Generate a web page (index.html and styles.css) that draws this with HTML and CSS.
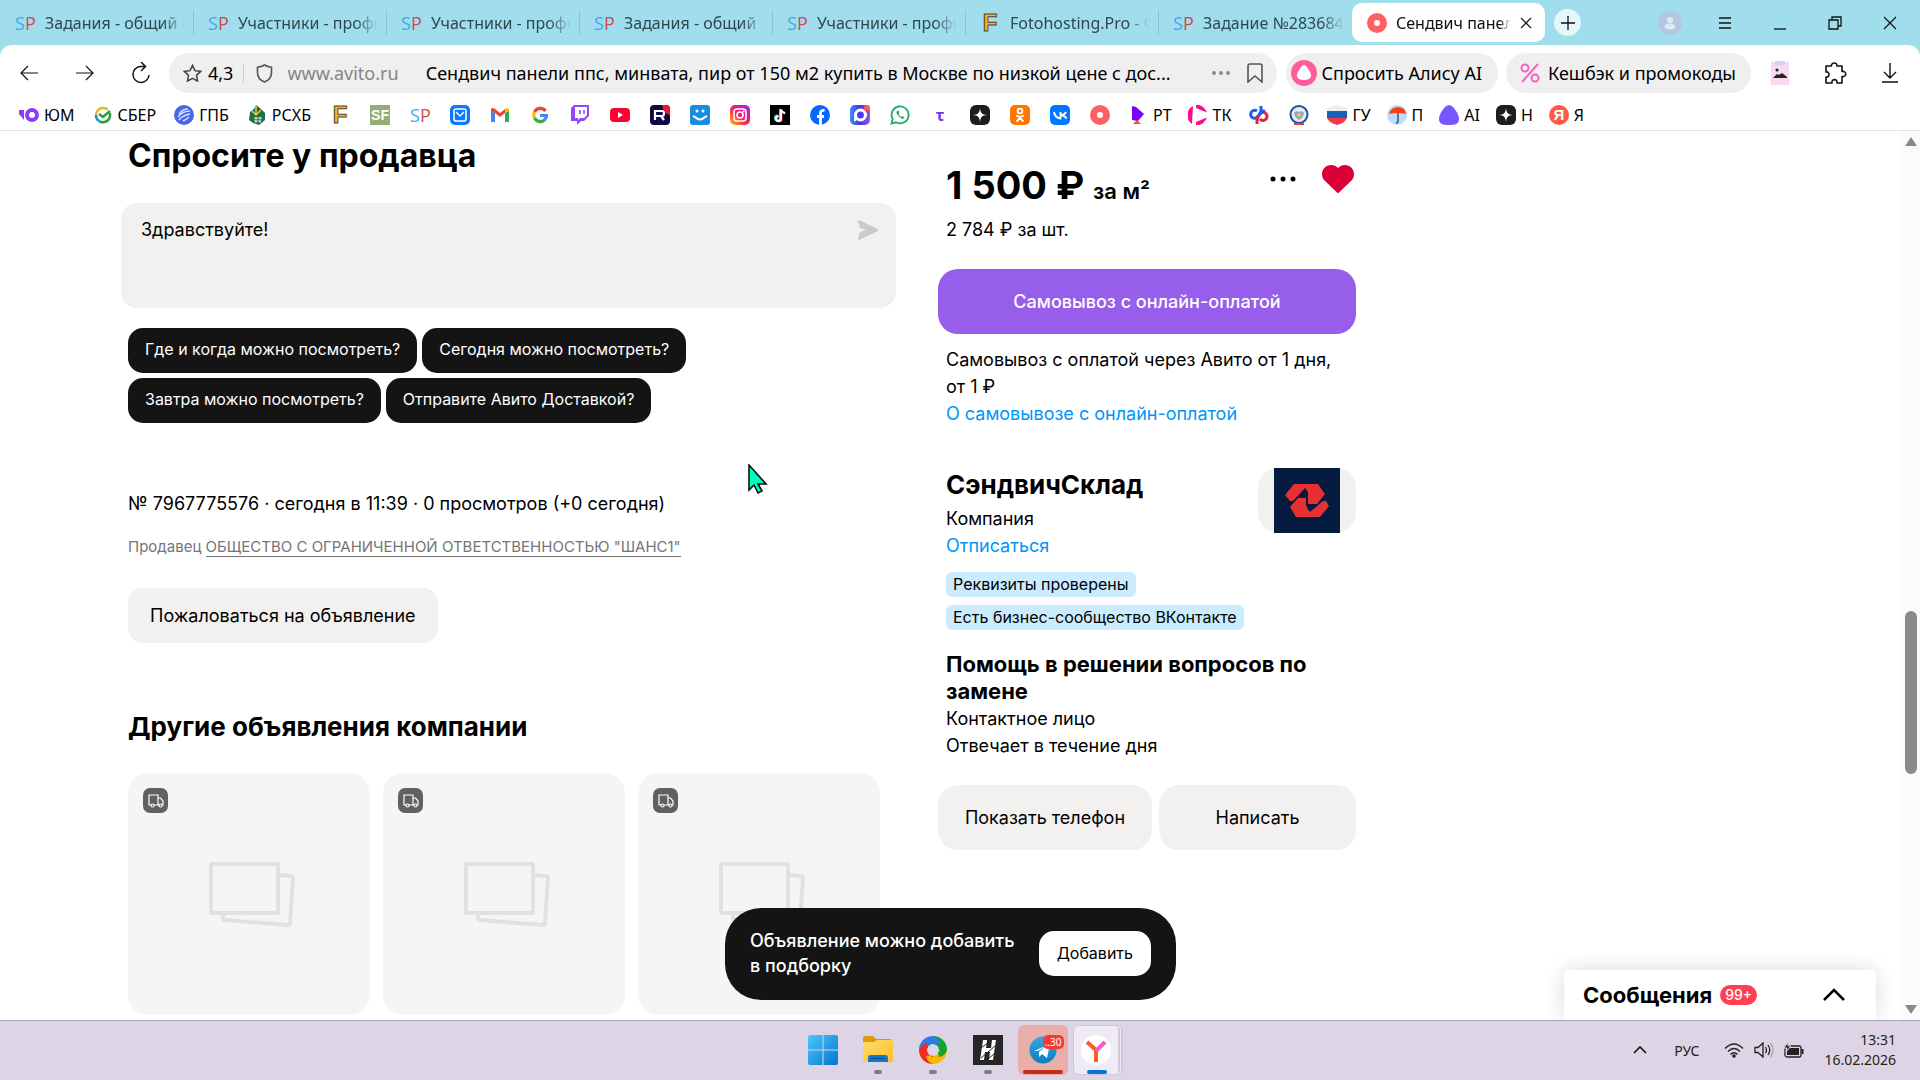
FILE: index.html
```html
<!DOCTYPE html>
<html lang="ru">
<head>
  <meta charset="UTF-8" />
  <meta name="viewport" content="width=device-width, initial-scale=1.0"/>
  <title>Сендвич панели ппс, минвата, пир от 150 м2</title>
  <link rel="stylesheet" href="styles.css">
</head>
<body>
  <!-- shared icons -->
  <svg class="defs" width="0" height="0" aria-hidden="true">
    <defs>
      <linearGradient id="insta" x1="0" y1="1" x2="1" y2="0">
        <stop offset="0" stop-color="#ffc400"/><stop offset=".45" stop-color="#ff1f5a"/><stop offset="1" stop-color="#a01cf5"/>
      </linearGradient>
      <linearGradient id="max" x1="0" y1="0" x2="1" y2="0">
        <stop offset="0" stop-color="#3a8dff"/><stop offset=".5" stop-color="#4436e8"/><stop offset="1" stop-color="#a050e0"/>
      </linearGradient>
      <linearGradient id="win" x1="0" y1="0" x2="1" y2="1">
        <stop offset="0" stop-color="#4cc9fb"/><stop offset="1" stop-color="#0573d2"/>
      </linearGradient>
      <linearGradient id="folder" x1="0" y1="0" x2="1" y2="1">
        <stop offset="0" stop-color="#ffdc6e"/><stop offset="1" stop-color="#fdbf24"/>
      </linearGradient>
      <linearGradient id="tg" x1="0" y1="0" x2="0" y2="1">
        <stop offset="0" stop-color="#35a9e0"/><stop offset="1" stop-color="#0d7fbf"/>
      </linearGradient>
    </defs>
    <symbol id="i-avito" viewBox="0 0 20 20"><circle cx="10" cy="10" r="10" fill="#ff6163"/><circle cx="10" cy="10" r="3" fill="#fff"/></symbol>
    <symbol id="i-neuro" viewBox="0 0 20 20"><rect width="20" height="20" rx="6" fill="#1d1d1f"/><path d="M10 3c.5 5 2 6.500 7 7-5 .5-6.500 2-7 7-.5-5-2-6.500-7-7 5-.5 6.500-2 7-7z" fill="#fff"/></symbol>
    <symbol id="i-truck" viewBox="0 0 16 14"><g fill="none" stroke="#fff" stroke-width="1.200"><path d="M3 11H1V1h9v10H6M10 4h2.500L15 7v4h-1M10 11h1"/><circle cx="4.500" cy="11.500" r="1.500"/><circle cx="12.500" cy="11.500" r="1.500"/></g></symbol>
    <symbol id="i-photo" viewBox="0 0 86 66"><g fill="none" stroke="#e1e1e1" stroke-width="4" stroke-linejoin="round"><rect x="2" y="3" width="67" height="49" rx="1"/><path d="M71 14l11 1q2 0 2 2l-3 45q0 2-2 2L16 59q-2 0-2-2v-4"/></g></symbol>
  </svg>

  <!-- tabs -->
  <header class="tabs">
    <a class="tab" href="#"><span class="sp"><b>S</b><i>P</i></span><span class="tab-text">Задания - общий с</span></a>
    <a class="tab" href="#"><span class="sp"><b>S</b><i>P</i></span><span class="tab-text">Участники - профи</span></a>
    <a class="tab" href="#"><span class="sp"><b>S</b><i>P</i></span><span class="tab-text">Участники - профи</span></a>
    <a class="tab" href="#"><span class="sp"><b>S</b><i>P</i></span><span class="tab-text">Задания - общий с</span></a>
    <a class="tab" href="#"><span class="sp"><b>S</b><i>P</i></span><span class="tab-text">Участники - профи</span></a>
    <a class="tab" href="#"><span class="foto">F</span><span class="tab-text">Fotohosting.Pro - Ф</span></a>
    <a class="tab" href="#"><span class="sp"><b>S</b><i>P</i></span><span class="tab-text">Задание №283684</span></a>
    <div class="tab active">
      <svg class="ico"><use href="#i-avito"/></svg>
      <span class="tab-text">Сендвич панели</span>
      <button class="tab-close" aria-label="Закрыть вкладку"><svg width="12" height="12" viewBox="0 0 12 12"><path d="M1 1l10 10M11 1L1 11" stroke="#222" stroke-width="1.300"/></svg></button>
    </div>
    <button class="new-tab" aria-label="Новая вкладка"><svg width="14" height="14" viewBox="0 0 14 14"><path d="M7 0v14M0 7h14" stroke="#111" stroke-width="1.300"/></svg></button>
    <div class="window-buttons">
      <button aria-label="Профиль"><svg width="24" height="24" viewBox="0 0 24 24"><circle cx="12" cy="12" r="12" fill="#b3c8de"/><circle cx="12" cy="9" r="3" fill="#ddebf4"/><ellipse cx="12" cy="15.500" rx="5.500" ry="3" fill="#ddebf4"/></svg></button>
      <button aria-label="Меню"><svg width="14" height="14" viewBox="0 0 14 14"><path d="M1 2h12M1 7h12M1 12h12" stroke="#111" stroke-width="1.300"/></svg></button>
      <button aria-label="Свернуть"><svg width="14" height="14" viewBox="0 0 14 14"><path d="M1 13h12" stroke="#111" stroke-width="1.300"/></svg></button>
      <button aria-label="Окно"><svg width="14" height="14" viewBox="0 0 14 14"><path d="M1 4h9v9H1zM4 4V1h9v9h-3" fill="none" stroke="#111" stroke-width="1.300"/></svg></button>
      <button aria-label="Закрыть"><svg width="14" height="14" viewBox="0 0 14 14"><path d="M1 1l12 12M13 1L1 13" stroke="#111" stroke-width="1.200"/></svg></button>
    </div>
  </header>

  <div class="chrome">
    <!-- toolbar -->
    <div class="toolbar">
      <button class="nav" aria-label="Назад"><svg width="18" height="16" viewBox="0 0 18 16"><path d="M18 8H1M8 1L1 8l7 7" fill="none" stroke="#111" stroke-width="1.200"/></svg></button>
      <button class="nav" aria-label="Вперёд"><svg width="18" height="16" viewBox="0 0 18 16"><path d="M0 8h17M10 1l7 7-7 7" fill="none" stroke="#111" stroke-width="1.200"/></svg></button>
      <button class="nav" aria-label="Обновить"><svg width="20" height="22" viewBox="0 0 20 22"><path d="M14 4.500H9A8 8 0 1 0 18 13M10 0l4.500 4.500L10 9" fill="none" stroke="#111" stroke-width="1.500"/></svg></button>
      <div class="address">
        <svg width="19" height="18" viewBox="0 0 20 19"><path d="M10 1.500l2.600 5.500 6 .8-4.400 4.200 1.100 6L10 15.100 4.700 18l1.100-6L1.400 7.800l6-.8z" fill="none" stroke="#444" stroke-width="1.600"/></svg>
        <span class="rate">4,3</span>
        <span class="bar"></span>
        <svg width="17" height="19" viewBox="0 0 17 19"><path d="M8.500 1c2 1.500 4.500 2 7 2.200v5.300c0 5-3 8-7 9.500-4-1.500-7-4.500-7-9.500V3.200C4 3 6.500 2.500 8.500 1z" fill="none" stroke="#555" stroke-width="1.600"/></svg>
        <span class="host">www.avito.ru</span>
        <input class="page-name" type="text" aria-label="Адрес страницы" value="Сендвич панели ппс, минвата, пир от 150 м2 купить в Москве по низкой цене с дос..." />
        <button aria-label="Ещё"><svg width="20" height="6" viewBox="0 0 20 6"><g fill="#8b8b8b"><circle cx="3" cy="3" r="2"/><circle cx="10" cy="3" r="2"/><circle cx="17" cy="3" r="2"/></g></svg></button>
        <button aria-label="В закладки"><svg width="16" height="20" viewBox="0 0 16 20"><path d="M1 3q0-2 2-2h10q2 0 2 2v16l-7-6-7 6z" fill="none" stroke="#555" stroke-width="1.600"/></svg></button>
      </div>
      <button class="pill alice"><svg width="26" height="26" viewBox="0 0 26 26"><circle cx="13" cy="13" r="13" fill="#ff5c9c"/><path d="M13 5c2.500 0 7 7.500 7 10.500S17 20 13 20s-7-1.500-7-4.500S10.500 5 13 5z" fill="#fff"/></svg>Спросить Алису AI</button>
      <button class="pill"><svg width="20" height="20" viewBox="0 0 20 20"><g fill="none" stroke="#f263c4" stroke-width="2"><circle cx="5" cy="5" r="3.500"/><circle cx="15" cy="15" r="3.500"/><path d="M18 1L2 19"/></g></svg>Кешбэк и промокоды</button>
      <div class="tools">
        <button aria-label="Картинка"><svg width="18" height="24" viewBox="0 0 18 24"><rect y="1" width="18" height="23" fill="#f8d8f3"/><rect x="4" width="10" height="4" fill="#d8d3f2"/><circle cx="6" cy="9" r="1.500" fill="#222"/><path d="M2 17l4-4 2 1 3-2 5 4v1z" fill="#222"/></svg></button>
        <button aria-label="Расширения"><svg width="23" height="22" viewBox="0 0 23 22"><path d="M2 4h5.500C7 0 13.500 0 13 4h5v5.500c5-1 5 6 0 5V21h-5c1-4.500-6-4.500-5 0H2v-6c4 1 4-6 0-5z" fill="none" stroke="#111" stroke-width="1.600" stroke-linejoin="round"/></svg></button>
        <button aria-label="Загрузки"><svg width="16" height="20" viewBox="0 0 16 20"><path d="M8 0v15M2 9l6 6 6-6M0 19h16" fill="none" stroke="#111" stroke-width="1.400"/></svg></button>
      </div>
    </div>

    <!-- bookmarks -->
    <nav class="bookmarks">
      <a class="named" href="#"><svg class="ico" viewBox="0 0 20 20"><circle cx="13" cy="10" r="7" fill="#8b3ffd"/><circle cx="13" cy="10" r="3" fill="#fff"/><path d="M0 5h5v10L0 9z" fill="#8b3ffd"/></svg>ЮМ</a>
      <a class="named" href="#"><svg class="ico" viewBox="0 0 20 20"><g fill="none" stroke-width="2.500"><path d="M10 3a7 7 0 0 0-7 7" stroke="#f2b414"/><path d="M10 3c2 0 3.500.5 4.500 1.500" stroke="#9fd01c"/><path d="M3 10a7 7 0 0 0 3 6" stroke="#1795e0"/><path d="M6 16a7 7 0 0 0 11-6V8" stroke="#21a038"/><path d="M6 9l4 3 7-6" stroke="#21a038"/></g></svg>СБЕР</a>
      <a class="named" href="#"><svg class="ico" viewBox="0 0 20 20"><circle cx="10" cy="10" r="10" fill="#4668e8"/><path d="M5 9c2-3 5-5 9-5M4 12c3-4 7-6 12-6M5 15c2-3 6-5 11-6M9 16c2-1 4-2 6-4" fill="none" stroke="#d7dfff" stroke-width="1.400"/></svg>ГПБ</a>
      <a class="named" href="#"><svg class="ico" viewBox="0 0 20 20"><path d="M9 0l5 4 4 4v7l-6 5-6-2-4-3 1-8 4-3z" fill="#1d7044"/><path d="M9 1v9M5 6l4 4 5-5" stroke="#e6c94d" stroke-width="1.500" fill="none"/><path d="M7 13h8M7 16h7M9 12v6M13 12v6" stroke="#dbe9df"/></svg>РСХБ</a>
      <a href="#" aria-label="Fotohosting"><span class="foto">F</span></a>
      <a href="#" aria-label="SF"><span class="sf">SF</span></a>
      <a href="#" aria-label="SP"><span class="sp"><b>S</b><i>P</i></span></a>
      <a href="#" aria-label="Почта"><svg class="ico" viewBox="0 0 20 20"><rect width="20" height="20" rx="5" fill="#0a78ff"/><rect x="4" y="4" width="12" height="12" rx="2" fill="none" stroke="#fff" stroke-width="1.500"/><path d="M6 7l4 4 4-4" fill="none" stroke="#fff" stroke-width="1.500"/></svg></a>
      <a href="#" aria-label="Gmail"><svg class="ico" viewBox="0 0 20 20"><path d="M1 17V5l4 3v9z" fill="#4285f4"/><path d="M15 17V8l4-3v12z" fill="#34a853"/><path d="M1 6V4q2-2 4 0l5 4 5-4v4l-5 4-5-4z" fill="#ea4335"/><path d="M15 8V4q3-2 4 0v2z" fill="#fbbc04"/></svg></a>
      <a href="#" aria-label="Google"><svg class="ico" viewBox="0 0 20 20"><g fill="none" stroke-width="3.200"><path d="M15.500 6A6.500 6.500 0 0 0 4.500 7" stroke="#ea4335"/><path d="M4.500 7a6.500 6.500 0 0 0 0 6" stroke="#fbbc05"/><path d="M4.500 13a6.500 6.500 0 0 0 10 2" stroke="#34a853"/><path d="M14.500 15q2-2 2-4.500H10" stroke="#4285f4"/></g></svg></a>
      <a href="#" aria-label="Twitch"><svg class="ico" viewBox="0 0 20 20"><path d="M4 0h15v11l-5 5h-3l-4 4v-4H1V3z" fill="#9146ff"/><path d="M5 2h12v8l-3 3h-4l-2 2v-2H5z" fill="#fff"/><path d="M10 5v4M14 5v4" stroke="#9146ff" stroke-width="1.600"/></svg></a>
      <a href="#" aria-label="YouTube"><svg class="ico" viewBox="0 0 20 20"><rect y="3" width="20" height="14" rx="4" fill="#f03"/><path d="M8 7l5 3-5 3z" fill="#fff"/></svg></a>
      <a href="#" aria-label="Rutube"><svg class="ico" viewBox="0 0 20 20"><rect width="20" height="20" rx="4" fill="#100943"/><path d="M12 0h4q4 0 4 4v6q-7-1-8-10z" fill="#ed143b"/><path d="M5 15V6h7q2 0 2 2.500T12 11H5M11 11l3 4" fill="none" stroke="#fff" stroke-width="2.200"/></svg></a>
      <a href="#" aria-label="Смайл"><svg class="ico" viewBox="0 0 20 20"><rect width="20" height="20" rx="3" fill="#168de2"/><circle cx="7" cy="6" r="1.500" fill="#fff"/><circle cx="13" cy="6" r="1.500" fill="#fff"/><path d="M3 11l2 1q5 5 10 0l2-1" fill="none" stroke="#fff" stroke-width="2"/></svg></a>
      <a href="#" aria-label="Instagram"><svg class="ico" viewBox="0 0 20 20"><rect width="20" height="20" rx="5" fill="url(#insta)"/><g fill="none" stroke="#fff" stroke-width="1.600"><rect x="4" y="4" width="12" height="12" rx="3"/><circle cx="10" cy="10" r="3"/></g><circle cx="13.500" cy="6.500" r="1" fill="#fff"/></svg></a>
      <a href="#" aria-label="TikTok"><svg class="ico" viewBox="0 0 20 20"><rect width="20" height="20"/><g fill="none" stroke-width="2"><path d="M10 4v9a2.500 2.500 0 1 1-2.500-2.500M10 4q1 3 4 3.500" stroke="#25f4ee"/><path d="M11.500 5v9A2.500 2.500 0 1 1 9 11.500M11.500 5q1 3 4 3.500" stroke="#fe2c55"/><path d="M11 4.500v9A2.500 2.500 0 1 1 8.500 11M11 4.500q1 3 4 3.500" stroke="#fff"/></g></svg></a>
      <a href="#" aria-label="Facebook"><svg class="ico" viewBox="0 0 20 20"><circle cx="10" cy="10" r="10" fill="#0866ff"/><path d="M10.500 20v-9.500M7 11.500h7M10.500 12V8q0-3 4-2.500" fill="none" stroke="#fff" stroke-width="2.800"/></svg></a>
      <a href="#" aria-label="MAX"><svg class="ico" viewBox="0 0 20 20"><rect width="20" height="20" rx="5" fill="url(#max)"/><circle cx="10.500" cy="10" r="5" fill="none" stroke="#fff" stroke-width="3"/><path d="M4 10v6.500q2 0 3-2z" fill="#fff"/><circle cx="17" cy="3" r="3" fill="#ff5a5a"/></svg></a>
      <a href="#" aria-label="WhatsApp"><svg class="ico" viewBox="0 0 20 20"><path d="M1.500 18.500l1.200-4.500a8.500 8.500 0 1 1 3.300 3.300z" fill="#fff" stroke="#25a866" stroke-width="1.800"/><path d="M7 6q-1.500 1.500 1 4.500t5 3.500l1.500-1.500-2-1.500-1.200 1q-2-1-2.800-3l1-1L8.500 5.500z" fill="#25a866"/></svg></a>
      <a href="#" aria-label="Тау"><span class="tau">τ</span></a>
      <a href="#" aria-label="Нейро"><svg class="ico"><use href="#i-neuro"/></svg></a>
      <a href="#" aria-label="Одноклассники"><svg class="ico" viewBox="0 0 20 20"><rect width="20" height="20" rx="5" fill="#ff7700"/><g fill="none" stroke="#fff" stroke-width="1.800"><circle cx="10" cy="6" r="2.400"/><path d="M6 10.500q4 2.500 8 0M6.500 16.500L10 13l3.500 3.500M10 12v1"/></g></svg></a>
      <a href="#" aria-label="ВКонтакте"><svg class="ico" viewBox="0 0 20 20"><rect width="20" height="20" rx="5" fill="#07f"/><path d="M4 7q1 6 6.500 6.500V7M16 7q-1.500 3-5 3.200 4 .3 5.500 3.300" fill="none" stroke="#fff" stroke-width="1.900"/></svg></a>
      <a href="#" aria-label="Авито"><svg class="ico"><use href="#i-avito"/></svg></a>
      <a class="named" href="#"><svg class="ico" viewBox="0 0 20 20"><path d="M4 1l4 1 8 7-6 7-6-1z" fill="#7700ff"/><path d="M9 15l4 4H5z" fill="#ff4f12"/></svg>РТ</a>
      <a class="named" href="#"><svg class="ico" viewBox="0 0 20 20"><path d="M5 1L4 19A10.500 10.500 0 0 1 5 1zM8 0q7-1 11 7.500L8 3zM19 12.500Q15 21 8 20v-3z" fill="#ff0a8c"/></svg>ТК</a>
      <a href="#" aria-label="Партнёр"><svg class="ico" viewBox="0 0 20 20"><g fill="none" stroke-width="3"><path d="M12 1v5q-1 4-5 7a4 4 0 1 1 1-7" stroke="#1764e8"/><path d="M8 19v-4q1-4 4-7a4 4 0 1 1-1 6" stroke="#ed2039"/><path d="M10 10q3-5 6-3.500" stroke="#1764e8"/></g></svg></a>
      <a href="#" aria-label="Налоговая"><svg class="ico" viewBox="0 0 20 20"><circle cx="10" cy="9.500" r="8.500" fill="#e6edf5" stroke="#1c549e" stroke-width="2"/><path d="M5 8q2-3 5-1 3-2 5 1-1 5-5 7-4-2-5-7z" fill="#8fa6b8"/><circle cx="10" cy="10" r="2" fill="#f0c65c"/><path d="M5 19h10" stroke="#e43c31" stroke-width="2"/></svg></a>
      <a class="named" href="#"><svg class="ico" viewBox="0 0 20 20"><path d="M0 3l10-3 10 3v4H0z" fill="#eee"/><path d="M0 6h20v7H0z" fill="#1762b8"/><path d="M0 13h20q-2 5-10 7-8-2-10-7z" fill="#f0384a"/></svg>ГУ</a>
      <a class="named" href="#"><svg class="ico" viewBox="0 0 20 20"><circle cx="10" cy="10" r="10" fill="#bcdcff"/><path d="M2 9q2-7 9-7t8 7q-8-2-17 0z" fill="#ff3c17"/><path d="M11 8v8q0 2-2 2" fill="none" stroke="#345" stroke-width="1.300"/></svg>П</a>
      <a class="named" href="#"><svg class="ico" viewBox="0 0 20 20"><path d="M10 0c4 0 10 9 10 14s-4 6-10 6-10-1-10-6S6 0 10 0z" fill="#7855ff"/></svg>AI</a>
      <a class="named" href="#"><svg class="ico"><use href="#i-neuro"/></svg>Н</a>
      <a class="named" href="#"><span class="ya">Я</span>Я</a>
    </nav>
  </div>

  <!-- page -->
  <div class="viewport">
    <main class="item">
      <section class="left">
        <h2 class="ask-title">Спросите у продавца</h2>
        <div class="message">
          <textarea aria-label="Сообщение продавцу">Здравствуйте!</textarea>
          <button aria-label="Отправить"><svg width="22" height="20" viewBox="0 0 22 20"><path d="M1 1q0-1 1-1l19 9q1 1 0 2L2 20q-1 0-1-1l2-7 6-2-6-2z" fill="#cbcac8"/></svg></button>
        </div>
        <div class="chips">
          <button>Где и когда можно посмотреть?</button>
          <button>Сегодня можно посмотреть?</button>
          <button>Завтра можно посмотреть?</button>
          <button>Отправите Авито Доставкой?</button>
        </div>
        <p class="stats">№ 7967775576 · сегодня в 11:39 · 0 просмотров (+0 сегодня)</p>
        <p class="legal">Продавец <a href="#">ОБЩЕСТВО С ОГРАНИЧЕННОЙ ОТВЕТСТВЕННОСТЬЮ "ШАНС1"</a></p>
        <button class="report">Пожаловаться на объявление</button>
        <h3 class="other-title">Другие объявления компании</h3>
        <div class="cards">
          <a class="card" href="#" aria-label="Объявление 1"><span class="truck"><svg width="16" height="14"><use href="#i-truck"/></svg></span><svg width="86" height="66"><use href="#i-photo"/></svg></a>
          <a class="card" href="#" aria-label="Объявление 2"><span class="truck"><svg width="16" height="14"><use href="#i-truck"/></svg></span><svg width="86" height="66"><use href="#i-photo"/></svg></a>
          <a class="card" href="#" aria-label="Объявление 3"><span class="truck"><svg width="16" height="14"><use href="#i-truck"/></svg></span><svg width="86" height="66"><use href="#i-photo"/></svg></a>
        </div>
      </section>

      <aside class="right">
        <div class="price-row">
          <div class="price">1 500 ₽ <small>за м²</small></div>
          <button aria-label="Ещё"><svg width="26" height="6" viewBox="0 0 26 6"><circle cx="3" cy="3" r="2.500"/><circle cx="13" cy="3" r="2.500"/><circle cx="23" cy="3" r="2.500"/></svg></button>
          <button aria-label="В избранном"><svg width="32" height="28" viewBox="0 0 32 28"><path d="M9 0c3 0 5 1 7 3 2-2 4-3 7-3 5 0 9 4 9 9 0 3-1 5-3 7L17 27.500q-1 1-2 0L3 16C1 14 0 12 0 9c0-5 4-9 9-9z" fill="#db0038"/></svg></button>
        </div>
        <p class="per-item">2 784 ₽ за шт.</p>
        <button class="buy">Самовывоз с онлайн-оплатой</button>
        <p class="text">Самовывоз с оплатой через Авито от 1 дня, от 1 ₽<br><a href="#">О самовывозе с онлайн-оплатой</a></p>
        <div class="seller">
          <div>
            <h3>СэндвичСклад</h3>
            <p>Компания<br><a href="#">Отписаться</a></p>
          </div>
          <div class="avatar"><svg width="66" height="65" viewBox="0 0 66 65"><rect width="66" height="65" fill="#051a3f"/><g fill="#e63032"><path d="M11 27l9-11h24l7 10-8 10H34V24l-3-4-12 13h-3z"/><path d="M55 38l-9 11H22l-6-10 8-9h9v10l3 4 13-11h3z"/></g><path d="M33 25v13" stroke="#051a3f" stroke-width="2"/></svg></div>
        </div>
        <div class="badges"><span>Реквизиты проверены</span><span>Есть бизнес-сообщество ВКонтакте</span></div>
        <h4>Помощь в решении вопросов по замене</h4>
        <p class="contact">Контактное лицо<br>Отвечает в течение дня</p>
        <div class="actions"><button class="phone">Показать телефон</button><button class="write">Написать</button></div>
      </aside>
    </main>

    <div class="scrollbar"><span class="up"></span><span class="thumb"></span><span class="down"></span></div>

    <div class="toast">
      <p>Объявление можно добавить<br>в подборку</p>
      <button>Добавить</button>
    </div>
    <button class="messenger">Сообщения <span>99+</span><svg width="22" height="14" viewBox="0 0 22 14"><path d="M1 12L11 2l10 10" fill="none" stroke="#000" stroke-width="2.500"/></svg></button>
    <svg class="cursor" width="20" height="32" viewBox="0 0 20 32"><path d="M1 1v25l5-5 4 8 4-2-4-7h8z" fill="#0fb" stroke="#111" stroke-width="1.600"/></svg>
  </div>

  <!-- taskbar -->
  <footer class="taskbar">
    <div class="apps">
      <button aria-label="Пуск"><svg width="30" height="30" viewBox="0 0 30 30"><path d="M0 2q0-2 2-2h12.500v14.500H0zM15.500 0H28q2 0 2 2v12.500H15.500zM0 15.500h14.500V30H2q-2 0-2-2zM15.500 15.500H30V28q0 2-2 2H15.500z" fill="url(#win)"/></svg></button>
      <button class="run" aria-label="Проводник"><svg width="30" height="28" viewBox="0 0 30 28"><path d="M0 2q0-2 2-2h8l3 3h15v8H0z" fill="#dc9a0a"/><path d="M0 6h11l3-2h14q2 0 2 2v18q0 2-2 2H2q-2 0-2-2z" fill="url(#folder)"/><path d="M5 26v-4q0-3 3-3h14q3 0 3 3v4z" fill="#0d78cc"/><path d="M8 22.500h14" stroke="#044e8c" stroke-width="1.200"/></svg></button>
      <button class="run" aria-label="Фотографии"><svg width="30" height="30" viewBox="0 0 30 30"><g fill="none" stroke-width="8"><path d="M5 15A10 10 0 0 1 15 5" stroke="#2f7bec"/><path d="M15 5a10 10 0 0 1 10 10" stroke="#12a52c"/><path d="M25 15a10 10 0 0 1-10 10" stroke="#fbb604"/><path d="M15 25A10 10 0 0 1 5 15" stroke="#ee2c26"/></g><path d="M15 1q6 2 7 8l-5 1q0-2-2-2z" fill="#2f7bec"/><path d="M29 15q-2 6-8 7l-1-5q2 0 2-2z" fill="#12a52c"/><path d="M15 29q-6-2-7-8l5-1q0 2 2 2z" fill="#fbb604"/><path d="M1 15q2-6 8-7l1 5q-2 0-2 2z" fill="#ee2c26"/></svg></button>
      <button class="run" aria-label="H"><svg width="30" height="30" viewBox="0 0 30 30"><rect width="30" height="30" fill="#262626"/><path d="M10 5h4l-1 8h5l1-8h4l-3 20h-4l1-8h-5l-1 8H7z" fill="#fff"/><path d="M8 13l8-6M8 23l14-12M15 24l7-6" stroke="#262626" stroke-width="1"/></svg></button>
      <button class="alert" aria-label="Telegram"><svg width="28" height="28" viewBox="0 0 28 28"><circle cx="14" cy="14" r="13.500" fill="url(#tg)"/><path d="M5 15l16-7-3 14-5-4-3 3v-5l7-6-8 5z" fill="#fff"/></svg><span class="count">..30</span></button>
      <button class="current" aria-label="Яндекс Браузер"><svg width="30" height="30" viewBox="0 0 30 30"><circle cx="15" cy="15" r="15" fill="#fff"/><path d="M15 27V15L6 7" fill="none" stroke="#fc5a20" stroke-width="4"/><path d="M15 16l9-9" stroke="#f25fc0" stroke-width="4"/></svg></button>
    </div>
    <div class="tray">
      <button aria-label="Скрытые значки"><svg width="14" height="8" viewBox="0 0 14 8"><path d="M1 7l6-6 6 6" fill="none" stroke="#111" stroke-width="1.600"/></svg></button>
      <span class="lang">РУС</span>
      <div class="status">
        <svg width="20" height="15" viewBox="0 0 20 15"><g fill="none" stroke="#222" stroke-width="1.400"><path d="M1 5.500q9-9 18 0M4 8.500q6-6 12 0M6.500 11.500q3.500-3.500 7 0"/></g><circle cx="10" cy="13" r="1.800" fill="#222"/></svg>
        <svg width="20" height="16" viewBox="0 0 20 16"><g fill="none" stroke="#222" stroke-width="1.300"><path d="M1 5.500h3L9 1v14l-5-4.500H1zM11.500 5q2 3 0 6M14 3q3.500 5 0 10"/><path d="M16.500 1q5 7 0 14" stroke="#aaa4b2"/></g></svg>
        <svg width="20" height="17" viewBox="0 0 20 17"><rect x="1" y="4" width="16" height="11" rx="2" fill="none" stroke="#222" stroke-width="1.300"/><path d="M3 6h12v7H3z" fill="#222"/><path d="M18.500 7v5" stroke="#222" stroke-width="2"/><path d="M4 0L0 6h3l-1 4 5-6H4z" fill="#222" stroke="#ddd5e6"/></svg>
      </div>
      <div class="clock">13:31<br>16.02.2026</div>
    </div>
  </footer>
</body>
</html>
```
FILE: styles.css
```css
* {
  box-sizing: border-box;
}

body {
  margin: 0;
  height: 100vh;
  display: flex;
  flex-direction: column;
  overflow: hidden;
  background: #a0deee;
  font-family: "Noto Sans", sans-serif;
  font-size: 16px;
  color: #000;
}

h2, h3, h4, p {
  margin: 0;
}

a {
  color: inherit;
  text-decoration: none;
}

button {
  padding: 0;
  border: none;
  background: none;
  font: inherit;
  color: inherit;
  cursor: pointer;
}

svg {
  display: block;
  flex: none;
}

.defs {
  position: absolute;
}

.ico {
  width: 20px;
  height: 20px;
}

/* tabs */
.tabs {
  display: flex;
  align-items: center;
  height: 45px;
  padding-left: 1px;
}

.tab {
  display: flex;
  align-items: center;
  gap: 10px;
  width: 193px;
  height: 25px;
  padding: 0 8px 0 14px;
  border-right: 1px solid #8bc4d4;
  color: #2f474e;
}

.tab:nth-child(7) {
  border-right: none;
}

.tab-text {
  flex: 1;
  overflow: hidden;
  white-space: nowrap;
  mask-image: linear-gradient(to right, #000 84%, transparent);
}

.tab.active {
  gap: 9px;
  height: 39px;
  padding: 0 13px 0 15px;
  border: none;
  border-radius: 10px;
  background: #fff;
  color: #111;
}

.tab.active .tab-text {
  mask-image: linear-gradient(to right, #000 90%, transparent);
}

.sp {
  width: 20px;
  font-size: 18px;
  line-height: 20px;
  text-align: center;
  font-family: "Open Sans", sans-serif;
}

.sp b {
  font-weight: 400;
  color: #42a8eb;
}

.sp i {
  font-style: normal;
  color: #d24a4f;
}

.foto {
  width: 20px;
  text-align: center;
  font: bold 24px/20px "Liberation Sans", sans-serif;
  color: #fbb12b;
  -webkit-text-stroke: 1px #5a4520;
}

.new-tab {
  display: grid;
  place-items: center;
  width: 27px;
  height: 27px;
  margin-left: 9px;
  border-radius: 50%;
  background: #e6f6fb;
}

.window-buttons {
  display: flex;
  margin-left: auto;
  padding-right: 3px;
}

.window-buttons button {
  display: grid;
  place-items: center;
  width: 55px;
  height: 40px;
}

/* toolbar */
.chrome {
  background: #fff;
  border-radius: 12px 12px 0 0;
  border-bottom: 1px solid #e2e2e2;
}

.toolbar {
  display: flex;
  align-items: center;
  height: 56px;
  padding-left: 1px;
  font-size: 18px;
}

.nav {
  display: grid;
  place-items: center;
  width: 56px;
  height: 40px;
}

.address {
  flex: 1;
  display: flex;
  align-items: center;
  height: 40px;
  margin-right: 9px;
  padding: 0 14px;
  border-radius: 20px;
  background: #efefef;
}

.rate {
  margin: 0 10px 0 6px;
}

.bar {
  width: 1px;
  height: 20px;
  margin-right: 12px;
  background: #ccc;
}

.host {
  margin: 0 27px 0 14px;
  color: #858585;
}

.page-name {
  flex: 1;
  min-width: 0;
  padding: 0;
  border: none;
  background: none;
  font: inherit;
}

.address button {
  margin-left: 16px;
}

.pill {
  display: flex;
  align-items: center;
  gap: 8px;
  height: 40px;
  padding: 0 15px 0 14px;
  border-radius: 20px;
  background: #efefef;
}

.alice {
  gap: 4px;
  margin-right: 8px;
  padding: 0 16px 0 5px;
}

.tools {
  display: flex;
  gap: 35px;
  padding: 0 22px 0 20px;
}

/* bookmarks */
.bookmarks {
  display: flex;
  align-items: center;
  gap: 20px;
  height: 29px;
  padding: 0 20px 1px;
}

.bookmarks a {
  display: flex;
  align-items: center;
  gap: 5px;
}

.bookmarks .named {
  margin: 0 -2px;
}

.bookmarks .named:nth-child(-n+4) {
  margin: 0 -1px;
}

.sf, .ya {
  width: 20px;
  height: 20px;
  color: #fff;
  text-align: center;
  font: bold 15px/20px "Liberation Sans", sans-serif;
}

.sf {
  font-size: 14px;
  background: #91ae79;
}

.ya {
  border-radius: 50%;
  background: #ff5b45;
}

.tau {
  width: 20px;
  text-align: center;
  font-weight: 700;
  line-height: 20px;
  color: #6a3cf0;
}

/* page */
.viewport {
  position: relative;
  flex: 1;
  min-height: 0;
  display: flex;
  overflow: hidden;
  background: #fff;
  font-family: Inter, "Noto Sans", sans-serif;
  font-size: 18px;
  line-height: 27px;
}

.viewport a {
  color: #0095f6;
}

.item {
  flex: 1;
  display: flex;
  gap: 42px;
  padding-left: 121px;
}

.left {
  width: 775px;
  padding-left: 7px;
}

.ask-title {
  padding: 5px 0 27px;
  font-size: 32px;
  line-height: 40px;
}

.message {
  display: flex;
  align-items: flex-start;
  height: 105px;
  margin: 0 0 20px -7px;
  padding: 13px 17px 13px 20px;
  border-radius: 16px;
  background: #f2f1ef;
}

.message textarea {
  flex: 1;
  height: 79px;
  padding: 0;
  border: none;
  background: none;
  resize: none;
  font: inherit;
}

.message button {
  padding-top: 4px;
}

.chips {
  display: flex;
  flex-wrap: wrap;
  gap: 5px;
  width: 580px;
}

.chips button {
  height: 45px;
  padding: 0 17px 2px;
  border-radius: 15px;
  background: #141414;
  color: #fff;
  font-size: 16px;
}

.stats {
  padding-top: 67px;
}

.legal {
  padding: 16px 0 28px;
  font-size: 15px;
  color: #757575;
}

.viewport .legal a {
  color: #757575;
  border-bottom: 1px solid #757575;
}

.report {
  height: 55px;
  padding: 0 22px;
  border-radius: 15px;
  background: #f2f1ef;
}

.other-title {
  padding: 68px 0 30px;
  font-size: 26px;
  line-height: 32px;
}

.cards {
  display: flex;
  gap: 13px;
}

.card {
  position: relative;
  display: grid;
  place-items: center;
  width: 242px;
  height: 242px;
  padding-left: 6px;
  border-radius: 20px;
  background: #f5f5f5;
}

.truck {
  position: absolute;
  top: 15px;
  left: 15px;
  display: grid;
  place-items: center;
  width: 25px;
  height: 25px;
  border-radius: 7px;
  background: #616161;
}

.right {
  width: 418px;
  padding: 30px 0 0 8px;
}

.price-row {
  display: flex;
  align-items: flex-start;
  gap: 26px;
  padding-right: 2px;
}

.price {
  flex: 1;
  font-size: 38px;
  font-weight: 700;
  line-height: 48px;
}

.price small {
  font-size: 22px;
  font-weight: 600;
}

.price-row button {
  display: grid;
  place-items: center;
  height: 36px;
}

.per-item {
  padding: 1px 0 26px;
}

.buy {
  display: block;
  width: 418px;
  height: 65px;
  margin: 0 0 12px -8px;
  border-radius: 20px;
  background: #965eeb;
  color: #fff;
  font-weight: 500;
}

.text {
  padding-right: 20px;
}

.seller {
  display: flex;
  justify-content: space-between;
  padding-top: 41px;
}

.seller h3 {
  padding-bottom: 3px;
  font-size: 26px;
  line-height: 34px;
}

.avatar {
  display: grid;
  place-items: center;
  width: 98px;
  height: 65px;
  border-radius: 20px;
  background: #f1f1f0;
}

.badges {
  display: flex;
  flex-direction: column;
  align-items: flex-start;
  gap: 8px;
  padding: 13px 0 21px;
}

.badges span {
  height: 25px;
  padding: 0 7px;
  border-radius: 6px;
  background: #cbecff;
  font-size: 16px;
  line-height: 25px;
}

.right h4 {
  font-size: 22px;
}

.actions {
  display: flex;
  gap: 7px;
  margin: 26px 0 0 -8px;
}

.actions button {
  height: 65px;
  border-radius: 20px;
  background: #f2f1ef;
}

.phone {
  width: 214px;
}

.write {
  flex: 1;
}

.scrollbar {
  display: flex;
  flex-direction: column;
  align-items: center;
  width: 19px;
  padding: 6px 0;
  background: #fbfbfb;
}

.up, .down {
  border: 6px solid transparent;
  border-top: none;
  border-bottom: 9px solid #8a8a8a;
}

.down {
  border-top: 9px solid #8a8a8a;
  border-bottom: none;
  margin-top: auto;
}

.thumb {
  width: 12px;
  height: 163px;
  margin-top: 465px;
  border-radius: 6px;
  background: #8a8a8a;
}

/* overlays */
.toast {
  position: absolute;
  left: 725px;
  bottom: 20px;
  display: flex;
  align-items: center;
  justify-content: space-between;
  width: 451px;
  height: 92px;
  padding: 0 25px 2px;
  border-radius: 36px;
  background: #141414;
  color: #fff;
  font-weight: 500;
  line-height: 25px;
}

.toast button {
  height: 45px;
  padding: 0 18px;
  border-radius: 15px;
  background: #fff;
  color: #000;
  font-size: 16px;
  font-weight: 400;
}

.messenger {
  position: absolute;
  right: 44px;
  bottom: 0;
  display: flex;
  align-items: center;
  width: 312px;
  height: 50px;
  padding: 0 31px 0 19px;
  border-radius: 4px;
  background: #fff;
  box-shadow: 0 0 20px rgba(0, 0, 0, 0.15);
  font-size: 22px;
  font-weight: 700;
}

.messenger span {
  height: 20px;
  margin: 0 auto 0 8px;
  padding: 0 5px;
  border-radius: 10px;
  background: #ff4053;
  color: #fff;
  font-size: 14px;
  line-height: 20px;
  font-weight: 500;
}

.cursor {
  position: absolute;
  left: 748px;
  top: 333px;
}

/* taskbar */
.taskbar {
  display: grid;
  grid-template-columns: 1fr auto 1fr;
  align-items: center;
  height: 60px;
  padding-bottom: 1px;
  border-top: 1px solid #aca6b5;
  background: #ddd5e6;
}

.apps {
  grid-column: 2;
  display: flex;
  gap: 5px;
}

.apps button {
  position: relative;
  display: grid;
  place-items: center;
  width: 50px;
  height: 50px;
  border-radius: 6px;
}

.apps .run::after,
.apps .alert::after,
.apps .current::after {
  content: "";
  position: absolute;
  bottom: 1px;
  left: 21px;
  width: 8px;
  height: 4px;
  border-radius: 2px;
  background: #817a89;
}

.apps .alert {
  background: #e9aeaa;
}

.apps .alert::after {
  left: 5px;
  width: 40px;
  background: #c42b1c;
}

.apps .current {
  border: 1px solid #d0c8d8;
  border-right: 5px double #d0c8d8;
  background: #eeebf4;
}

.apps .current::after {
  left: 13px;
  bottom: 0;
  width: 20px;
  background: #0078d4;
}

.count {
  position: absolute;
  top: 10px;
  right: 4px;
  height: 14px;
  padding: 0 2px;
  border-radius: 5px;
  background: #f23c34;
  color: #fff;
  font-size: 10px;
  line-height: 14px;
}

.tray {
  display: flex;
  justify-content: flex-end;
  align-items: center;
  padding-right: 24px;
  font-size: 14px;
  color: #222;
}

.lang {
  margin: 0 25px 0 27px;
}

.status {
  display: flex;
  align-items: center;
  gap: 10px;
  margin-right: 20px;
}

.clock {
  text-align: right;
  line-height: 20px;
}
```
